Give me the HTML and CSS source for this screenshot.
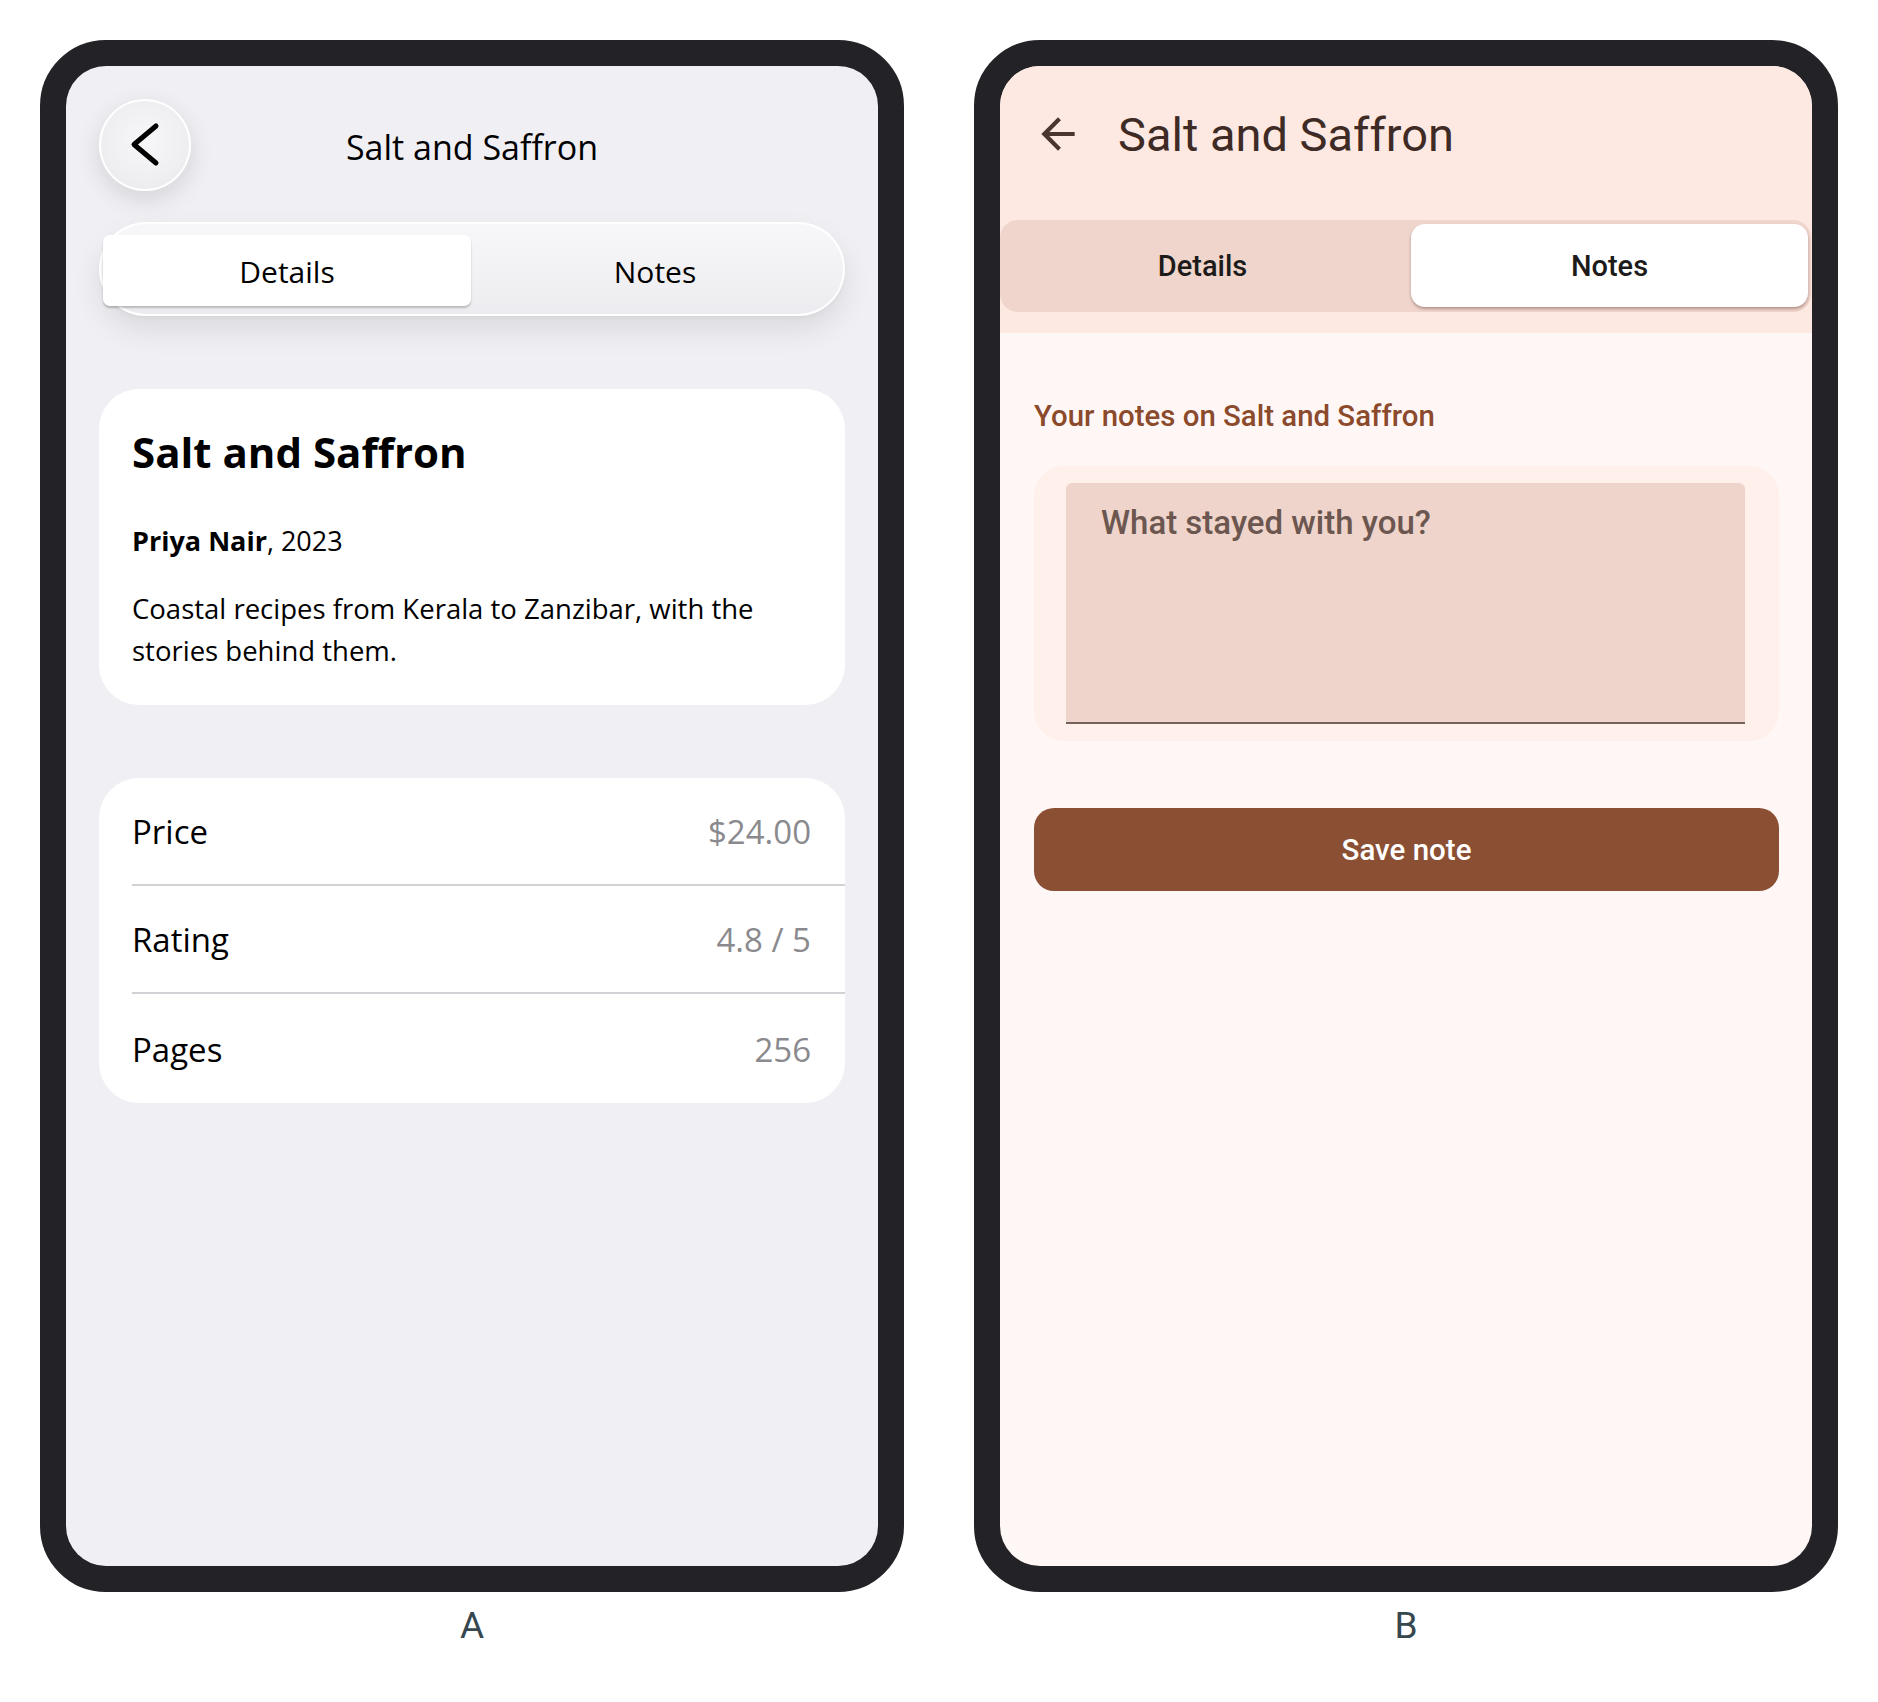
FILE: index.html
```html
<!DOCTYPE html>
<html lang="en">
<head>
<meta charset="utf-8">
<title>Salt and Saffron</title>
<link rel="stylesheet" href="styles.css">
</head>
<body>
<div class="stage">
  <div class="col">
    <div class="phone">
      <div class="screen screen-a">
        <div class="a-header">
          <button class="a-back" aria-label="Back">
            <svg width="92" height="92" viewBox="0 0 92 92"><polyline points="57,27 35,45.5 57,64" fill="none" stroke="#000" stroke-width="5" stroke-linecap="round" stroke-linejoin="round"/></svg>
          </button>
          <div class="a-title">Salt and Saffron</div>
          <div class="a-spacer"></div>
        </div>
        <div class="a-seg">
          <div class="a-seg-item a-seg-on">Details</div>
          <div class="a-seg-item">Notes</div>
        </div>
        <div class="a-card">
          <h1 class="a-book">Salt and Saffron</h1>
          <p class="a-author"><b>Priya Nair</b>, 2023</p>
          <p class="a-desc">Coastal recipes from Kerala to Zanzibar, with the stories behind them.</p>
        </div>
        <div class="a-list">
          <div class="a-row"><span>Price</span><span class="a-val">$24.00</span></div>
          <div class="a-row"><span>Rating</span><span class="a-val">4.8 / 5</span></div>
          <div class="a-row a-row-last"><span>Pages</span><span class="a-val">256</span></div>
        </div>
      </div>
    </div>
    <div class="label">A</div>
  </div>
  <div class="col">
    <div class="phone">
      <div class="screen screen-b">
        <div class="b-header">
          <div class="b-bar">
            <svg class="b-arrow" width="50" height="50" viewBox="0 0 24 24"><path d="M20 11H7.830l5.590-5.590L12 4l-8 8 8 8 1.410-1.410L7.830 13H20v-2z" fill="#4a3530"/></svg>
            <div class="b-title">Salt and Saffron</div>
          </div>
          <div class="b-tabs">
            <div class="b-tab b-tab-off">Details</div>
            <div class="b-tab b-tab-on">Notes</div>
          </div>
        </div>
        <div class="b-content">
          <div class="b-label">Your notes on Salt and Saffron</div>
          <div class="b-field">
            <div class="b-input">What stayed with you?</div>
          </div>
          <div class="b-btn">Save note</div>
        </div>
      </div>
    </div>
    <div class="label">B</div>
  </div>
</div>
</body>
</html>
```
FILE: styles.css
```css
html, body {
  margin: 0;
  padding: 0;
  background: #ffffff;
}
body {
  width: 1878px;
  height: 1702px;
  overflow: hidden;
}
.stage {
  display: flex;
  gap: 70px;
  padding: 40px 0 0 40px;
}
.col {
  display: flex;
  flex-direction: column;
  align-items: center;
  width: 864px;
}
.phone {
  box-sizing: border-box;
  width: 864px;
  height: 1552px;
  border: 26px solid #232327;
  border-radius: 66px;
  background: #232327;
}
.screen {
  width: 812px;
  height: 1500px;
  border-radius: 40px;
  overflow: hidden;
}
.label {
  margin-top: 12px;
  font-family: Roboto, "Liberation Sans", sans-serif;
  font-size: 37px;
  line-height: 1.2;
  color: #37474f;
}

/* ---------- Phone A ---------- */
.screen-a {
  background: #f0eff4;
  font-family: "Open Sans", "Noto Sans", sans-serif;
  color: #000;
}
.a-header {
  display: grid;
  grid-template-columns: 92px 1fr 92px;
  align-items: center;
  padding: 33px 33px 0;
}
.a-back {
  width: 92px;
  height: 92px;
  padding: 0;
  border-radius: 50%;
  border: 2px solid rgba(255,255,255,0.95);
  background: radial-gradient(circle at 50% 45%, #f7f7f9 0%, #efeff2 60%, #e7e7eb 100%);
  box-shadow: 0 8px 24px rgba(0,0,0,0.12);
  display: flex;
  align-items: center;
  justify-content: center;
  box-sizing: border-box;
}
.a-back svg {
  display: block;
  margin: -2px;
}
.a-title {
  text-align: center;
  font-size: 34px;
  line-height: 1.2;
  padding-top: 4px;
}
.a-seg {
  margin: 31px 33px 0;
  height: 94px;
  box-sizing: border-box;
  border-radius: 47px;
  border: 2px solid rgba(255,255,255,0.95);
  background: linear-gradient(180deg, #f7f7f9 0%, #f1f1f4 60%, #ececf0 100%);
  box-shadow: 0 14px 30px rgba(0,0,0,0.09), 0 2px 4px rgba(0,0,0,0.04);
  display: grid;
  grid-template-columns: 1fr 1fr;
  padding: 11px 4px 8px 2px;
}
.a-seg-item {
  display: flex;
  align-items: center;
  justify-content: center;
  font-size: 30px;
  border-radius: 7px;
  padding-top: 1px;
}
.a-seg-on {
  background: #ffffff;
  box-shadow: 0 2px 2px rgba(0,0,0,0.22);
}
.a-card {
  margin: 73px 33px 0;
  background: #ffffff;
  border-radius: 40px;
  padding: 38px 33px 33px;
}
.a-book {
  margin: 0;
  font-size: 42px;
  font-weight: 700;
  line-height: 1.2;
}
.a-author {
  margin: 46px 0 0;
  font-size: 27px;
  line-height: 1.3;
}
.a-author b {
  font-weight: 700;
}
.a-desc {
  margin: 30px 0 0;
  font-size: 27.5px;
  line-height: 42px;
}
.a-list {
  margin: 73px 33px 0;
  background: #ffffff;
  border-radius: 40px;
  padding-left: 33px;
}
.a-row {
  height: 108px;
  box-sizing: border-box;
  display: flex;
  align-items: center;
  justify-content: space-between;
  padding-right: 34px;
  padding-top: 1px;
  font-size: 33px;
  border-bottom: 2px solid #d1d1d6;
}
.a-row-last {
  border-bottom: none;
  height: 109px;
}
.a-val {
  color: #8a8a8e;
}

/* ---------- Phone B ---------- */
.screen-b {
  background: #fff7f5;
  font-family: Roboto, "Liberation Sans", sans-serif;
}
.b-header {
  background: #fde9e2;
  padding-bottom: 21px;
}
.b-bar {
  height: 132px;
  box-sizing: border-box;
  padding-top: 3px;
  display: flex;
  align-items: center;
  padding-left: 33px;
}
.b-arrow {
  display: block;
}
.b-title {
  margin-left: 35px;
  padding-top: 3px;
  font-size: 47px;
  line-height: 1.2;
  color: #3f2b25;
}
.b-tabs {
  margin: 22px 1px 0 0;
  height: 92px;
  box-sizing: border-box;
  background: #efd5cc;
  border-radius: 18px;
  padding: 4px 3px 5px 4px;
  display: grid;
  grid-template-columns: 407px 1fr;
}
.b-tab {
  display: flex;
  align-items: center;
  justify-content: center;
  font-size: 29px;
  font-weight: 500;
  color: #1d1b1a;
  border-radius: 14px;
}
.b-tab-off {
  padding-right: 10px;
}
.b-tab-on {
  background: #ffffff;
  box-shadow: 0 2px 3px rgba(110,70,60,0.45);
}
.b-content {
  padding: 66px 33px 0 34px;
}
.b-label {
  font-size: 29.4px;
  font-weight: 500;
  line-height: 1.2;
  color: #8b4a2c;
}
.b-field {
  margin-top: 32px;
  background: #fff0eb;
  border-radius: 30px;
  padding: 17px 34px 17px 32px;
}
.b-input {
  height: 241px;
  box-sizing: border-box;
  background: #eed4ca;
  border-radius: 6px 6px 0 0;
  border-bottom: 2px solid #76625c;
  padding: 20px 35px 0;
  font-size: 33px;
  font-weight: 500;
  line-height: 1.2;
  color: #6c5650;
}
.b-btn {
  margin-top: 67px;
  height: 83px;
  border-radius: 20px;
  background: #8b4f33;
  color: #ffffff;
  display: flex;
  align-items: center;
  justify-content: center;
  font-size: 29.5px;
  font-weight: 500;
}
```
